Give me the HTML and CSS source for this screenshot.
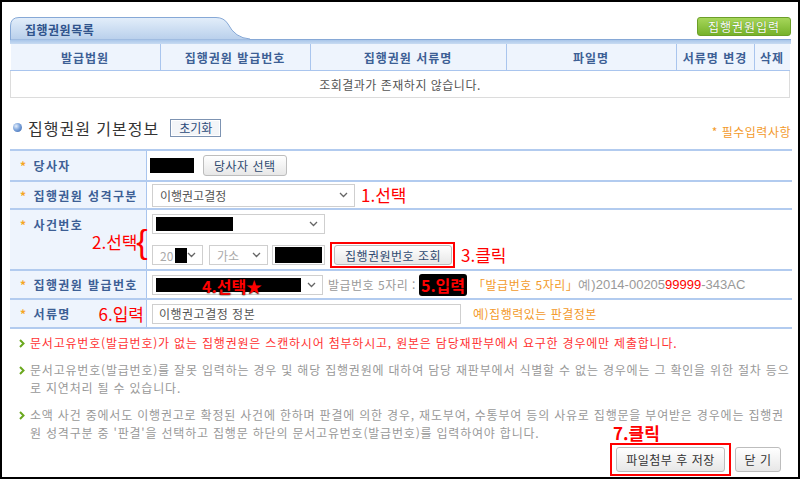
FILE: index.html
```html
<!DOCTYPE html>
<html lang="ko">
<head>
  <meta charset="UTF-8">
  <title>집행권원 등록</title>
  <link rel="stylesheet" href="styles.css">
</head>
<body>
<div class="window">

  <!-- 목록 -->
  <div class="list-head">
    <div class="tab">
      <svg class="tab-bg" width="240" height="23" viewBox="0 0 240 23">
        <defs>
          <linearGradient id="tabg" x1="0" y1="0" x2="0" y2="1">
            <stop offset="0" stop-color="#e3eefa"/>
            <stop offset="1" stop-color="#b8cfeb"/>
          </linearGradient>
        </defs>
        <path d="M0.5 23V9Q0.5 0.5 9 0.5H206Q214 0.5 218 7Q225 21 240 22V23Z" fill="url(#tabg)" stroke="#86a8d6"/>
      </svg>
      <span class="tab-title">집행권원목록</span>
    </div>
    <button class="btn-green">집행권원입력</button>
  </div>
  <div class="tab-bar"></div>
  <table class="list">
    <thead>
      <tr>
        <th class="c1">발급법원</th>
        <th class="c2">집행권원 발급번호</th>
        <th class="c3">집행권원 서류명</th>
        <th class="c4">파일명</th>
        <th class="c5">서류명 변경</th>
        <th class="c6">삭제</th>
      </tr>
    </thead>
    <tbody>
      <tr><td colspan="6">조회결과가 존재하지 않습니다.</td></tr>
    </tbody>
  </table>

  <!-- 기본정보 -->
  <div class="section-head">
    <h3><i class="dot"></i>집행권원 기본정보</h3>
    <button class="btn-line">초기화</button>
    <span class="req">* 필수입력사항</span>
  </div>

  <table class="form">
    <tr class="r1">
      <th><span class="star">*</span>당사자</th>
      <td>
        <div class="row">
          <span class="mask m-party"></span>
          <button class="btn">당사자 선택</button>
        </div>
      </td>
    </tr>
    <tr class="r2">
      <th><span class="star">*</span>집행권원 성격구분</th>
      <td>
        <div class="row">
          <div class="sel w-kind"><span>이행권고결정</span><svg width="9" height="6" viewBox="0 0 9 6"><path d="M1 1l3.5 3.5L8 1" fill="none" stroke="#666" stroke-width="1.3"/></svg></div>
          <span class="note-red">1.선택</span>
        </div>
      </td>
    </tr>
    <tr class="r3">
      <th>
        <span class="star">*</span>사건번호
        <span class="note-red n2">2.선택</span>
        <span class="brace">{</span>
      </th>
      <td>
        <div class="sel w-case"><span class="mask m-case"></span><svg width="9" height="6" viewBox="0 0 9 6"><path d="M1 1l3.5 3.5L8 1" fill="none" stroke="#666" stroke-width="1.3"/></svg></div>
        <div class="row line2">
          <div class="sel w-year"><span class="dim">20</span><span class="mask m-year"></span><svg width="9" height="6" viewBox="0 0 9 6"><path d="M1 1l3.5 3.5L8 1" fill="none" stroke="#666" stroke-width="1.3"/></svg></div>
          <div class="sel w-type"><span class="dim">가소</span><svg width="9" height="6" viewBox="0 0 9 6"><path d="M1 1l3.5 3.5L8 1" fill="none" stroke="#666" stroke-width="1.3"/></svg></div>
          <div class="inp w-no"><span class="mask m-no"></span></div>
          <div class="hl hl-search"><button class="btn btn-search">집행권원번호 조회</button></div>
          <span class="note-red">3.클릭</span>
        </div>
      </td>
    </tr>
    <tr class="r4">
      <th><span class="star">*</span>집행권원 발급번호</th>
      <td>
        <div class="row">
          <div class="sel w-issue"><span class="mask m-issue"></span><span class="tag-red t4">4.선택★</span><svg width="9" height="6" viewBox="0 0 9 6"><path d="M1 1l3.5 3.5L8 1" fill="none" stroke="#666" stroke-width="1.3"/></svg></div>
          <span class="gray">발급번호 5자리 :</span>
          <span class="badge">5.입력</span>
          <span class="orange">「발급번호 5자리」</span>
          <span class="gray ex">예)2014-00205<em>99999</em>-343AC</span>
        </div>
      </td>
    </tr>
    <tr class="r5">
      <th>
        <span class="star">*</span>서류명
        <span class="note-red n6">6.입력</span>
      </th>
      <td>
        <div class="row">
          <div class="inp w-doc">이행권고결정 정본</div>
          <span class="orange hint">예)집행력있는 판결정본</span>
        </div>
      </td>
    </tr>
  </table>

  <ul class="notes">
    <li class="red"><svg width="6" height="9" viewBox="0 0 6 9"><path d="M1 1l3.5 3.5L1 8" fill="none" stroke="#6aa81e" stroke-width="2"/></svg><span>문서고유번호(발급번호)가 없는 집행권원은 스캔하시어 첨부하시고, 원본은 담당재판부에서 요구한 경우에만 제출합니다.</span></li>
    <li><svg width="6" height="9" viewBox="0 0 6 9"><path d="M1 1l3.5 3.5L1 8" fill="none" stroke="#6aa81e" stroke-width="2"/></svg><span>문서고유번호(발급번호)를 잘못 입력하는 경우 및 해당 집행권원에 대하여 담당 재판부에서 식별할 수 없는 경우에는 그 확인을 위한 절차 등으로 지연처리 될 수 있습니다.</span></li>
    <li><svg width="6" height="9" viewBox="0 0 6 9"><path d="M1 1l3.5 3.5L1 8" fill="none" stroke="#6aa81e" stroke-width="2"/></svg><span>소액 사건 중에서도 이행권고로 확정된 사건에 한하며 판결에 의한 경우, 재도부여, 수통부여 등의 사유로 집행문을 부여받은 경우에는 집행권원 성격구분 중 '판결'을 선택하고 집행문 하단의 문서고유번호(발급번호)를 입력하여야 합니다.</span></li>
  </ul>

  <div class="actions">
    <div class="hl hl-save">
      <span class="note-red n7">7.클릭</span>
      <button class="btn btn-big">파일첨부 후 저장</button>
    </div>
    <button class="btn btn-close">닫 기</button>
  </div>

</div>
</body>
</html>
```

FILE: styles.css
```css
html, body {
  margin: 0;
  height: 100%;
  background: #fff;
}

body {
  font-family: "Noto Sans CJK KR", "Noto Sans", sans-serif;
  font-size: 12px;
  color: #555;
}

button {
  font-family: inherit;
  cursor: pointer;
}

.window {
  box-sizing: border-box;
  width: 800px;
  height: 479px;
  border: 2px solid #000;
  padding: 15px 7px 0 8px;
  overflow: hidden;
}

/* list header */
.list-head {
  display: flex;
  height: 22px;
}

.tab {
  position: relative;
  width: 240px;
  height: 22px;
}

.tab-bg {
  position: absolute;
  left: 0;
  top: 0;
}

.tab-title {
  position: relative;
  display: block;
  padding-left: 15px;
  line-height: 26px;
  font-weight: bold;
  color: #2f538c;
  letter-spacing: 0.5px;
}

.btn-green {
  margin-left: auto;
  width: 94px;
  height: 19px;
  padding: 0;
  border: 1px solid #6c9f28;
  border-radius: 3px;
  background: linear-gradient(#a6d65a, #76b22a);
  color: #fff;
  font-size: 12px;
  line-height: 16px;
  letter-spacing: 1px;
  text-shadow: 0 0 1px #4f7d17;
}

.tab-bar {
  height: 5px;
  box-sizing: border-box;
  border-top: 1px solid #86a8d6;
  background: linear-gradient(#a9c6ea, #c8dbf2);
}

.list {
  width: 780px;
  border-collapse: collapse;
}

.list th {
  height: 26px;
  padding: 0;
  background: #eef4fd;
  border-right: 1px solid #a9c5ee;
  border-bottom: 1px solid #a9c5ee;
  color: #3d5f95;
  font-weight: bold;
  letter-spacing: 1px;
}

.list th.c6 { border-right: none; }
.list .c1 { width: 149px; }
.list .c2 { width: 149px; }
.list .c3 { width: 195px; }
.list .c4 { width: 169px; }
.list .c5 { width: 77px; }

.list td {
  height: 24px;
  text-align: center;
  color: #555;
  letter-spacing: 0.5px;
  border: 1px solid #dcdcdc;
  border-top: none;
}

/* section */
.section-head {
  display: flex;
  align-items: center;
  height: 25px;
  margin: 17px 0 9px;
}

.section-head h3 {
  display: flex;
  align-items: center;
  margin: 0;
  font-size: 16px;
  font-weight: normal;
  color: #333;
  letter-spacing: 1px;
}

.dot {
  width: 9px;
  height: 9px;
  margin: 0 6px 0 3px;
  border-radius: 50%;
  background: radial-gradient(circle at 35% 35%, #e4eefb 0, #7ea5dc 45%, #2f5ea8 100%);
}

.btn-line {
  margin-left: 11px;
  width: 51px;
  height: 18px;
  padding: 0;
  border: 1px solid #7d93b2;
  box-shadow: inset 0 0 0 1px #fff;
  background: #f3f5f8;
  color: #2b4a78;
  font-size: 12px;
  line-height: 14px;
}

.req {
  margin-left: auto;
  align-self: flex-end;
  color: #f39a2b;
  font-size: 12px;
  letter-spacing: 0.5px;
}

/* form */
.form {
  width: 782px;
  border-collapse: collapse;
  border-top: 2px solid #b2cbef;
}

.form tr {
  border-bottom: 2px solid #b2cbef;
}

.form th {
  position: relative;
  width: 126px;
  padding: 0 0 0 10px;
  background: #eef4fd;
  border-right: 1px solid #a9c5ee;
  text-align: left;
  color: #3d5f95;
  font-weight: bold;
  letter-spacing: 1.4px;
}

.form td {
  padding: 0 0 0 5px;
}

.star {
  color: #f5a623;
  margin-right: 6px;
}

.r1 { height: 31px; }
.r2 { height: 28px; }
.r3 { height: 61px; }
.r4 { height: 29px; }
.r5 { height: 29px; }

.r3 th {
  vertical-align: top;
  padding-top: 6px;
}

.r3 td {
  vertical-align: top;
  padding-top: 4px;
}

.row {
  display: flex;
  align-items: center;
}

.mask {
  display: inline-block;
  background: #000;
}

.m-party { width: 44px; height: 15px; margin-right: 9px; margin-left: -2px; }
.m-case { width: 77px; height: 14px; }
.m-year { width: 13px; height: 15px; margin-left: 2px; }
.m-no { width: 47px; height: 16px; }
.m-issue { width: 145px; height: 14px; }

.btn {
  height: 21px;
  padding: 0 10px;
  border: 1px solid #bdbdbd;
  border-radius: 3px;
  background: linear-gradient(#ffffff, #e7e7e7);
  color: #2f4a70;
  font-size: 12px;
  letter-spacing: 0.5px;
}

.sel, .inp {
  box-sizing: border-box;
  display: flex;
  align-items: center;
  height: 20px;
  padding: 0 6px 0 3px;
  border: 1px solid #cfcfcf;
  background: #fff;
  color: #555;
}

.sel svg {
  margin-left: auto;
  flex: none;
}

.sel > span:first-child:not(.mask) {
  padding-left: 4px;
}

.dim { color: #aaa; }

.w-kind { width: 203px; height: 23px; }
.w-case { width: 173px; }
.w-year { width: 51px; }
.w-type { width: 59px; margin-left: 6px; }
.w-no { width: 53px; margin-left: 4px; padding: 0 2px; }
.w-issue { position: relative; width: 171px; }
.w-doc { width: 309px; padding-left: 6px; letter-spacing: 0.5px; }

.line2 {
  margin-top: 8px;
}

.hl {
  position: relative;
  border: 2px solid #f00;
}

.hl-search {
  margin-left: 5px;
  padding: 1px 1px 1px 2px;
}

.btn-search {
  width: 118px;
  height: 20px;
  padding: 0;
}

.note-red {
  margin-left: 6px;
  color: #f00;
  font-size: 17px;
  font-weight: normal;
  line-height: 20px;
  letter-spacing: 0;
  white-space: nowrap;
}

.n2 {
  position: absolute;
  left: 82px;
  top: 22px;
  margin: 0;
}

.brace {
  position: absolute;
  right: -3px;
  top: 13px;
  color: #f00;
  font-family: "Liberation Sans", sans-serif;
  font-weight: normal;
  font-size: 34px;
  line-height: 36px;
}

.n6 {
  position: absolute;
  right: 2px;
  top: 4px;
  margin: 0;
}

.tag-red {
  position: absolute;
  color: #f00;
  font-weight: bold;
  font-size: 16px;
  white-space: nowrap;
  text-shadow: 0 0 2px #000, 0 0 1px #000;
}

.t4 {
  left: 49px;
  top: -2px;
}

.gray {
  color: #999;
  white-space: nowrap;
}

.r4 .gray:not(.ex) {
  margin-left: 5px;
  letter-spacing: 0.5px;
}

.ex {
  font-family: "Liberation Sans", sans-serif;
  font-size: 13px;
}

.ex em {
  font-style: normal;
  color: #f00;
}

.badge {
  margin-left: 3px;
  padding: 0 2px;
  border-radius: 3px;
  background: #000;
  color: #f00;
  font-weight: bold;
  font-size: 16px;
  line-height: 22px;
}

.orange {
  color: #f39a2b;
  white-space: nowrap;
  margin-left: 6px;
  letter-spacing: 0.5px;
}

.hint {
  margin-left: 12px;
}

/* notes */
.notes {
  margin: 5px 0 0;
  padding: 0 0 0 9px;
  list-style: none;
  color: #999;
  line-height: 18.5px;
}

.notes li {
  display: flex;
  align-items: flex-start;
  margin-bottom: 8px;
  word-break: break-all;
  letter-spacing: 0.8px;
}

.notes li svg {
  flex: none;
  margin: 5px 5px 0 0;
}

.notes li.red {
  color: #f33;
}

.actions {
  display: flex;
  justify-content: flex-end;
  align-items: center;
  margin: -8px 10px 0 0;
}

.hl-save {
  padding: 2px 4px;
}

.n7 {
  position: absolute;
  left: 1px;
  top: -22px;
  margin: 0;
  font-weight: bold;
}

.btn-big {
  width: 109px;
  height: 25px;
  padding: 0;
  color: #333;
}

.btn-close {
  width: 46px;
  height: 25px;
  margin-left: 4px;
  padding: 0;
  color: #333;
}
```
